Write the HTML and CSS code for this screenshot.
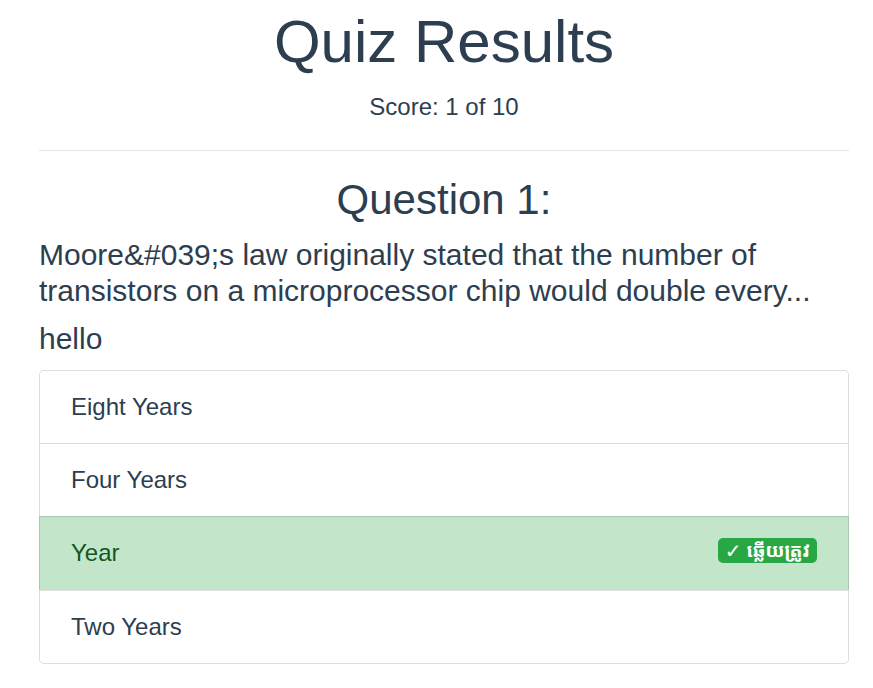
FILE: index.html
```html
<!DOCTYPE html>
<html lang="en">
<head>
<meta charset="utf-8">
<title>Quiz Results</title>
<link rel="stylesheet" href="styles.css">
</head>
<body>
<div class="container">
  <header class="results-header">
    <h1 class="title">Quiz Results</h1>
    <p class="score">Score: 1 of 10</p>
  </header>
  <hr class="divider">
  <section class="question">
    <h3 class="question-title">Question 1:</h3>
    <h5 class="question-text">Moore&amp;#039;s law originally stated that the number of transistors on a microprocessor chip would double every...</h5>
    <h5 class="answer-note">hello</h5>
    <ul class="list-group">
      <li class="list-item">Eight Years</li>
      <li class="list-item">Four Years</li>
      <li class="list-item list-item-success">Year <span class="badge"><span class="check">✓</span> ឆ្លើយត្រូវ</span></li>
      <li class="list-item">Two Years</li>
    </ul>
  </section>
</div>
</body>
</html>
```
FILE: styles.css
```css
* { box-sizing: border-box; }
html, body { margin: 0; padding: 0; background: #fff; }
body {
  font-family: "Liberation Sans", Arial, sans-serif;
  color: #2c3e50;
  font-size: 24px;
  line-height: 1.5;
}
.container {
  margin: 0 24px 0 39px;
  padding-top: 6px;
}
.results-header { text-align: center; }
.title {
  margin: 0 0 11px;
  font-size: 60px;
  font-weight: 400;
  line-height: 1.2;
}
.score {
  margin: 0;
  font-size: 24px;
  line-height: 1.5;
}
.divider {
  margin: 25px 0 0;
  border: 0;
  border-top: 1px solid #e6e6e6;
  height: 0;
}
.question-title {
  margin: 24px 0 12px;
  text-align: center;
  font-size: 42px;
  font-weight: 400;
  line-height: 1.2;
}
.question-text,
.answer-note {
  margin: 0 0 12px;
  font-size: 30px;
  font-weight: 400;
  line-height: 1.2;
}
.answer-note { margin-bottom: 13px; }
.list-group {
  list-style: none;
  margin: 0;
  padding: 0;
  display: flex;
  flex-direction: column;
}
.list-item {
  display: flex;
  align-items: flex-start;
  justify-content: space-between;
  padding: 18px 30px 18px 31px;
  margin-bottom: -1px;
  font-size: 24px;
  line-height: 36px;
  background: #fff;
  border: 1px solid rgba(0, 0, 0, 0.135);
}
.list-item:first-child { border-radius: 5px 5px 0 0; }
.list-item:last-child { border-radius: 0 0 5px 5px; margin-bottom: 0; }
.list-item-success {
  background: #c3e6cb;
  color: #155724;
  padding-bottom: 19px;
}
.badge {
  display: inline-flex;
  align-items: center;
  gap: 5px;
  margin-top: 3px;
  margin-right: 1px;
  background: #28a745;
  color: #fff;
  font-family: "Liberation Sans", "Noto Sans Khmer", "Khmer OS", sans-serif;
  font-weight: 700;
  font-size: 19px;
  height: 25px;
  padding: 0 7px;
  border-radius: 5px;
  line-height: 1;
}
.check {
  font-family: "DejaVu Sans", sans-serif;
  font-size: 20px;
}
```
